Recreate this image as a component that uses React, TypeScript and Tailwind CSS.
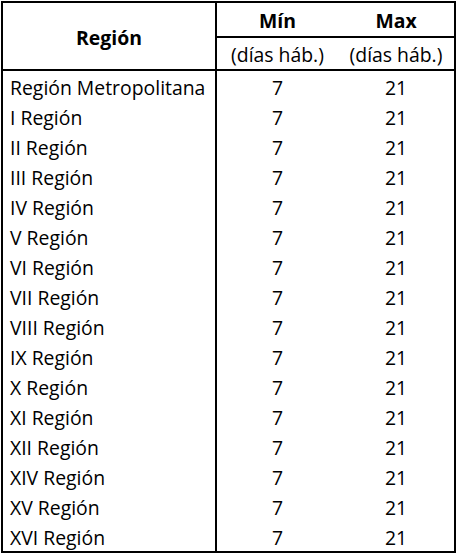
const regions = [
  "Región Metropolitana",
  "I Región",
  "II Región",
  "III Región",
  "IV Región",
  "V Región",
  "VI Región",
  "VII Región",
  "VIII Región",
  "IX Región",
  "X Región",
  "XI Región",
  "XII Región",
  "XIV Región",
  "XV Región",
  "XVI Región",
];

export default function App() {
  return (
    <div className="bg-white w-[459px] h-[558px] pt-px pl-px text-black font-['Open_Sans','Noto_Sans',sans-serif] text-[19.4px]">
      <div className="w-[455px] border-2 border-black">
        <div className="grid grid-cols-[212px_2px_121px_116px] border-b-2 border-black">
          <div className="row-span-3 flex items-center justify-center font-bold pt-[4px]">
            Región
          </div>
          <div className="row-span-3 bg-black" />
          <div className="h-[33px] flex items-center justify-center font-bold pt-[2px]">
            Mín
          </div>
          <div className="h-[33px] flex items-center justify-center font-bold pt-[2px]">
            Max
          </div>
          <div className="col-span-2 h-[2px] bg-black" />
          <div className="h-[31px] flex items-center justify-center pt-[2px]">
            (días háb.)
          </div>
          <div className="h-[31px] flex items-center justify-center pt-[2px]">
            (días háb.)
          </div>
        </div>
        <div className="grid grid-cols-[212px_2px_121px_116px]">
          <div className="flex flex-col">
            {regions.map((r) => (
              <div key={r} className="h-[30px] flex items-center pl-[7px] pt-[4px] whitespace-nowrap">
                {r}
              </div>
            ))}
          </div>
          <div className="bg-black" />
          <div className="flex flex-col">
            {regions.map((r) => (
              <div key={r} className="h-[30px] flex items-center justify-center pt-[4px]">
                7
              </div>
            ))}
          </div>
          <div className="flex flex-col">
            {regions.map((r) => (
              <div key={r} className="h-[30px] flex items-center justify-center pt-[4px]">
                21
              </div>
            ))}
          </div>
        </div>
      </div>
    </div>
  );
}
